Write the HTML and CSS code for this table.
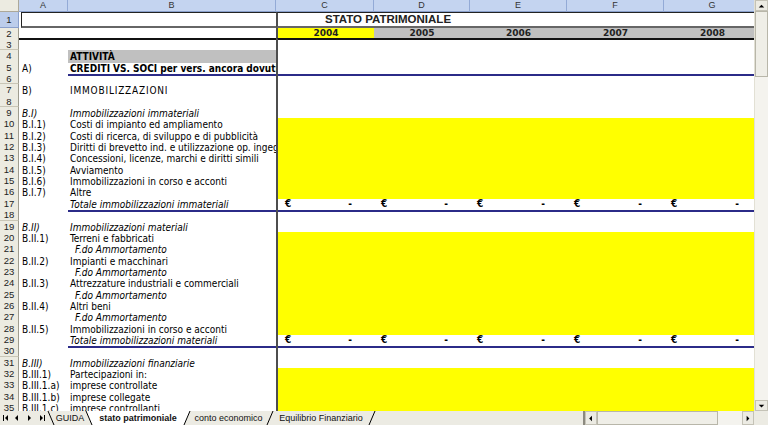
FILE: index.html
```html
<!DOCTYPE html>
<html lang="it">
<head>
<meta charset="utf-8">
<title>Stato patrimoniale</title>
<link rel="stylesheet" href="styles.css">
</head>
<body>
<div class="app">
  <div class="main">
    <div class="sheet">
      <div class="hdr">
        <div class="corner"></div><div class="ch">A</div><div class="ch">B</div><div class="ch">C</div><div class="ch">D</div><div class="ch">E</div><div class="ch">F</div><div class="ch">G</div>
      </div>
      <div class="r r1"><div class="rh sel">1</div><div class="t1l"></div><div class="t1r">STATO PATRIMONIALE</div></div>
      <div class="r r2"><div class="rh">2</div><div class="t2l"></div><div class="yr c y">2004</div><div class="yr g">2005</div><div class="yr g">2006</div><div class="yr g">2007</div><div class="yr g">2008</div></div>
      <div class="r"><div class="rh">3</div><div class="a"></div><div class="b"></div><div class="v"></div></div>
      <div class="r"><div class="rh">4</div><div class="a"></div><div class="b bold gray">ATTIVITÀ</div><div class="v"></div></div>
      <div class="r ul"><div class="rh">5</div><div class="a">A)</div><div class="b bold">CREDITI VS. SOCI per vers. ancora dovuti</div><div class="v"></div></div>
      <div class="r"><div class="rh">6</div><div class="a"></div><div class="b"></div><div class="v"></div></div>
      <div class="r"><div class="rh">7</div><div class="a">B)</div><div class="b caps">IMMOBILIZZAZIONI</div><div class="v"></div></div>
      <div class="r"><div class="rh">8</div><div class="a"></div><div class="b"></div><div class="v"></div></div>
      <div class="r"><div class="rh">9</div><div class="a it">B.I)</div><div class="b it">Immobilizzazioni immateriali</div><div class="v"></div></div>
      <div class="r"><div class="rh">10</div><div class="a">B.I.1)</div><div class="b">Costi di impianto ed ampliamento</div><div class="v y"></div></div>
      <div class="r"><div class="rh">11</div><div class="a">B.I.2)</div><div class="b">Costi di ricerca, di sviluppo e di pubblicità</div><div class="v y"></div></div>
      <div class="r"><div class="rh">12</div><div class="a">B.I.3)</div><div class="b">Diritti di brevetto ind. e utilizzazione op. ingegno</div><div class="v y"></div></div>
      <div class="r"><div class="rh">13</div><div class="a">B.I.4)</div><div class="b">Concessioni, licenze, marchi e diritti simili</div><div class="v y"></div></div>
      <div class="r"><div class="rh">14</div><div class="a">B.I.5)</div><div class="b">Avviamento</div><div class="v y"></div></div>
      <div class="r"><div class="rh">15</div><div class="a">B.I.6)</div><div class="b">Immobilizzazioni in corso e acconti</div><div class="v y"></div></div>
      <div class="r"><div class="rh">16</div><div class="a">B.I.7)</div><div class="b">Altre</div><div class="v y"></div></div>
      <div class="r ul"><div class="rh">17</div><div class="a"></div><div class="b it">Totale immobilizzazioni immateriali</div><div class="m c"><span>€</span><span>-</span></div><div class="m"><span>€</span><span>-</span></div><div class="m"><span>€</span><span>-</span></div><div class="m"><span>€</span><span>-</span></div><div class="m"><span>€</span><span>-</span></div></div>
      <div class="r"><div class="rh">18</div><div class="a"></div><div class="b"></div><div class="v"></div></div>
      <div class="r"><div class="rh">19</div><div class="a it">B.II)</div><div class="b it">Immobilizzazioni materiali</div><div class="v"></div></div>
      <div class="r"><div class="rh">20</div><div class="a">B.II.1)</div><div class="b">Terreni e fabbricati</div><div class="v y"></div></div>
      <div class="r"><div class="rh">21</div><div class="a"></div><div class="b it ind">F.do Ammortamento</div><div class="v y"></div></div>
      <div class="r"><div class="rh">22</div><div class="a">B.II.2)</div><div class="b">Impianti e macchinari</div><div class="v y"></div></div>
      <div class="r"><div class="rh">23</div><div class="a"></div><div class="b it ind">F.do Ammortamento</div><div class="v y"></div></div>
      <div class="r"><div class="rh">24</div><div class="a">B.II.3)</div><div class="b">Attrezzature industriali e commerciali</div><div class="v y"></div></div>
      <div class="r"><div class="rh">25</div><div class="a"></div><div class="b it ind">F.do Ammortamento</div><div class="v y"></div></div>
      <div class="r"><div class="rh">26</div><div class="a">B.II.4)</div><div class="b">Altri beni</div><div class="v y"></div></div>
      <div class="r"><div class="rh">27</div><div class="a"></div><div class="b it ind">F.do Ammortamento</div><div class="v y"></div></div>
      <div class="r"><div class="rh">28</div><div class="a">B.II.5)</div><div class="b">Immobilizzazioni in corso e acconti</div><div class="v y"></div></div>
      <div class="r ul"><div class="rh">29</div><div class="a"></div><div class="b it">Totale immobilizzazioni materiali</div><div class="m c"><span>€</span><span>-</span></div><div class="m"><span>€</span><span>-</span></div><div class="m"><span>€</span><span>-</span></div><div class="m"><span>€</span><span>-</span></div><div class="m"><span>€</span><span>-</span></div></div>
      <div class="r"><div class="rh">30</div><div class="a"></div><div class="b"></div><div class="v"></div></div>
      <div class="r"><div class="rh">31</div><div class="a it">B.III)</div><div class="b it">Immobilizzazioni finanziarie</div><div class="v"></div></div>
      <div class="r"><div class="rh">32</div><div class="a">B.III.1)</div><div class="b">Partecipazioni in:</div><div class="v y"></div></div>
      <div class="r"><div class="rh">33</div><div class="a">B.III.1.a)</div><div class="b">imprese controllate</div><div class="v y"></div></div>
      <div class="r"><div class="rh">34</div><div class="a">B.III.1.b)</div><div class="b">imprese collegate</div><div class="v y"></div></div>
      <div class="r"><div class="rh">35</div><div class="a">B.III.1.c)</div><div class="b">imprese controllanti</div><div class="v y"></div></div>
    </div>
    <div class="vscroll">
      <div class="sbtn"><svg width="12" height="10" viewBox="0 0 12 10"><polygon points="3,6.5 9,6.5 6,3.5" fill="#000"/></svg></div>
      <div class="vthumb"></div>
      <div class="vtrack"></div>
      <div class="sbtn"><svg width="12" height="10" viewBox="0 0 12 10"><polygon points="3,3.5 9,3.5 6,6.5" fill="#000"/></svg></div>
    </div>
  </div>
  <div class="tabs">
    <svg class="nav" width="47" height="14" viewBox="0 0 47 14">
      <rect x="3" y="4" width="1" height="6" fill="#000"/><polygon points="8,4 8,10 5,7" fill="#000"/>
      <polygon points="18,4 18,10 15,7" fill="#000"/>
      <polygon points="28,4 28,10 31,7" fill="#000"/>
      <polygon points="40,4 40,10 43,7" fill="#000"/><rect x="44" y="4" width="1" height="6" fill="#000"/>
    </svg>
    <svg class="sep" width="8" height="14" viewBox="0 0 8 14"><line x1="1" y1="0" x2="7" y2="14" stroke="#000" stroke-width="1"/></svg>
    <span class="tab w30">GUIDA</span>
    <svg class="sep" width="8" height="14" viewBox="0 0 8 14"><polygon points="1,0 8,0 8,14 7,14" fill="#fff"/><line x1="1" y1="0" x2="7" y2="14" stroke="#000" stroke-width="1"/></svg>
    <span class="tab active">stato patrimoniale</span>
    <svg class="sep" width="8" height="14" viewBox="0 0 8 14"><polygon points="0,0 7,0 1,14 0,14" fill="#fff"/><line x1="7" y1="0" x2="1" y2="14" stroke="#000" stroke-width="1"/></svg>
    <span class="tab w75">conto economico</span>
    <svg class="sep" width="8" height="14" viewBox="0 0 8 14"><line x1="7" y1="0" x2="1" y2="14" stroke="#000" stroke-width="1"/></svg>
    <span class="tab w94">Equilibrio Finanziario</span>
    <svg class="sep" width="8" height="14" viewBox="0 0 8 14"><line x1="7" y1="0" x2="1" y2="14" stroke="#000" stroke-width="1"/></svg>
    <div class="fill"></div>
    <div class="hscroll">
      <div class="split"></div>
      <div class="hbtn"><svg width="11" height="13" viewBox="0 0 11 13"><polygon points="6.5,3.5 6.5,9.5 3.5,6.5" fill="#000"/></svg></div>
      <div class="hthumb"></div>
      <div class="htrack"></div>
      <div class="hbtn"><svg width="11" height="13" viewBox="0 0 11 13"><polygon points="4,3.5 4,9.5 7,6.5" fill="#000"/></svg></div>
    </div>
    <div class="cornerbr"></div>
  </div>
</div>
</body>
</html>
```
FILE: styles.css
```css
* { box-sizing: border-box; margin: 0; padding: 0; }
html, body { width: 768px; height: 425px; overflow: hidden; background: #fff; }
body { font-family: "DejaVu Sans", Verdana, sans-serif; color: #000; }

.app { display: flex; flex-direction: column; width: 768px; height: 425px; }
.main { display: flex; height: 411px; }
.sheet { width: 754px; height: 411px; overflow: hidden; }

.hdr, .r {
  display: grid;
  grid-template-columns: 19px 49px 208px 98px 96px 97px 97px 97px;
  width: 761px;
}
.hdr { height: 12px; }
.corner { background: #ecebe1; border-right: 1px solid #aca899; border-bottom: 1px solid #aca899; }
.ch {
  background: #c4d4f0;
  border-right: 1px solid #93aad6;
  border-bottom: 1px solid #8aa0cc;
  font: 9px/11px "Liberation Sans", Arial, sans-serif;
  color: #333;
  text-align: center;
}

.r {
  height: 11.35px;
  font-family: "DejaVu Sans Condensed", "DejaVu Sans", sans-serif;
  font-stretch: condensed;
  font-size: 10px;
  line-height: 11.35px;
  white-space: nowrap;
}
.r1 { height: 16px; }
.r2 { height: 11px; }

.rh {
  background: #ecebe1;
  border-right: 1px solid #9e9c8f;
  border-bottom: 1px solid #c9c6b6;
  font: 9.5px/12px "Liberation Sans", Arial, sans-serif;
  color: #222;
  text-align: center;
  overflow: hidden;
}
.r2 .rh { line-height: 11px; }
.rh.sel { background: #bccdeb; border-bottom: 1px solid #8aa0cc; border-right: 1px solid #8aa0cc; line-height: 15px; }

.t1l {
  grid-column: 2 / 4;
  margin-left: 2px;
  border-left: 1px solid #222;
  border-top: 1px solid #222;
  border-bottom: 2px solid #666;
}
.t1r {
  grid-column: 4 / 9;
  border-left: 2px solid #4e4e4e;
  border-top: 1px solid #222;
  border-bottom: 2px solid #666;
  padding-left: 47px;
  font: bold 11.5px/13px "Liberation Sans", Arial, sans-serif;
  color: #222;
}
.t2l { grid-column: 2 / 4; border-bottom: 2px solid #111; }
.yr {
  border-bottom: 2px solid #111;
  font-family: "DejaVu Sans", sans-serif;
  font-stretch: normal;
  font-weight: bold;
  font-size: 9px;
  line-height: 10px;
  text-align: center;
  color: #222;
}
.g { background: #c0c0c0; }
.y { background: #ffff00; }
.c { border-left: 2px solid #4e4e4e; }

.a, .b { padding-top: 1px; overflow-x: clip; overflow-y: visible; }
.a { padding-left: 3px; }
.b { padding-left: 2px; }
.v { grid-column: 4 / 9; border-left: 2px solid #4e4e4e; }
.m {
  display: flex;
  justify-content: space-between;
  padding: 1px 22px 0 7px;
  font-weight: bold;
  font-size: 10px;
  line-height: 10px;
}
.bold { font-weight: bold; }
.gray { background: #c0c0c0; }
.it { font-style: italic; }
.ind { padding-left: 7px; }
.caps { letter-spacing: 0.8px; }
.ul .b, .ul .v, .ul .m { border-bottom: 2px solid #2b2b88; }

.vscroll { width: 14px; height: 411px; display: flex; flex-direction: column; background: #f4f3ee; border-left: 1px solid #e2e0d4; }
.sbtn { height: 11px; background: #ecebe3; border: 1px solid #c4c2b6; display: flex; align-items: center; justify-content: center; }
.vthumb { height: 66px; background: #efeee7; border: 1px solid #b8b6a9; }
.vtrack { flex: 1; }

.tabs {
  display: flex;
  height: 14px;
  background: #ecebe3;
  font: 9px/14px "Liberation Sans", Arial, sans-serif;
  color: #111;
}
.nav, .sep { flex: none; display: block; }
.tab { flex: none; text-align: center; white-space: nowrap; overflow: hidden; }
.w30 { width: 30px; }
.w75 { width: 75px; }
.w94 { width: 94px; }
.active { width: 90px; background: #fff; font-weight: bold; }
.fill { flex: 1; }
.hscroll { width: 171px; display: flex; background: #f4f3ee; }
.split { width: 2px; border-left: 1px solid #8c8a80; border-right: 1px solid #8c8a80; }
.hbtn { width: 12px; background: #ecebe3; border: 1px solid #c4c2b6; display: flex; align-items: center; justify-content: center; }
.hthumb { width: 121px; background: #efeee7; border: 1px solid #b8b6a9; }
.htrack { flex: 1; }
.cornerbr { width: 14px; background: #ecebe3; }
```
